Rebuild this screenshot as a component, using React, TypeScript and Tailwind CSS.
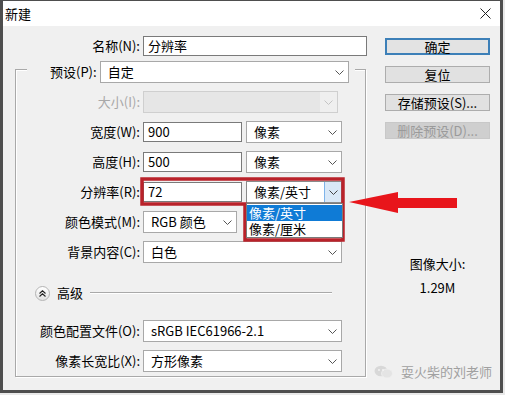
import React from "react";

function Chevron({ color = "#555" }: { color?: string }) {
  return (
    <svg width="9" height="5" viewBox="0 0 9 5">
      <polyline points="0.5,0.5 4.5,4.5 8.5,0.5" fill="none" stroke={color} strokeWidth="1" />
    </svg>
  );
}

function Select({ w, text, disabled }: { w: string; text?: string; disabled?: boolean }) {
  return (
    <div
      className={`flex items-center h-[22px] border ${
        disabled ? "border-[#cfcfcf] bg-[#e6e6e6]" : "border-[#a8a8a8] bg-white"
      } ${w}`}
    >
      <span className="flex-1 pl-[7px] text-[13px] leading-[20px] whitespace-nowrap">{text}</span>
      <span
        className={`w-[17px] h-full flex items-center justify-center ${disabled ? "bg-[#efefef]" : ""}`}
      >
        <Chevron color={disabled ? "#c4c4c4" : "#555"} />
      </span>
    </div>
  );
}

function Input({ w, value }: { w: string; value: string }) {
  return (
    <div className={`h-[20px] border border-[#7a7a7a] bg-white flex items-center pl-[4px] text-[13px] ${w}`}>
      {value}
    </div>
  );
}

function Row({
  label,
  disabled,
  children,
  className = "",
}: {
  label: string;
  disabled?: boolean;
  children: React.ReactNode;
  className?: string;
}) {
  return (
    <div className={`flex items-center h-[22px] ${className}`}>
      <div className={`w-[124px] text-right text-[13px] ${disabled ? "text-[#a8a8a8]" : "text-black"}`}>
        {label}
      </div>
      <div className="ml-[3px] flex items-center gap-[4px]">{children}</div>
    </div>
  );
}

function Button({ label, primary, disabled }: { label: string; primary?: boolean; disabled?: boolean }) {
  return (
    <div
      className={`w-[105px] h-[17px] flex items-center justify-center text-[13px] leading-none ${
        primary
          ? "border-2 border-[#3d80b8] bg-[#e3e3e3] text-black"
          : disabled
          ? "border border-[#c8c8c8] bg-[#cfcfcf] text-[#9a9a9a]"
          : "border border-[#adadad] bg-[#e1e1e1] text-black"
      }`}
    >
      {label}
    </div>
  );
}

export default function App() {
  return (
    <div className="relative w-[505px] h-[395px] bg-[#e9e9e9] font-['Noto_Sans_CJK_SC','Noto_Sans',sans-serif] text-black">
      <div className="w-[503px] h-[393px] border-[#4e4e4e] border-x-[3px] border-b-[3px] border-t flex flex-col">
        {/* title bar */}
        <div className="h-[25px] bg-white flex items-center justify-between pl-[2px] pr-[9px]">
          <span className="text-[13px]">新建</span>
          <svg width="11" height="11" viewBox="0 0 11 11">
            <path d="M0.5 0.5 L10.5 10.5 M10.5 0.5 L0.5 10.5" stroke="#222" strokeWidth="1" />
          </svg>
        </div>

        {/* body */}
        <div className="flex-1 bg-[#f0f0f0] relative flex">
          {/* left column */}
          <div className="w-[372px] flex flex-col">
            <div className="mt-[10px] flex items-center h-[20px]">
              <div className="w-[137px] text-right text-[13px]">名称(N):</div>
              <div className="ml-[3px]">
                <Input w="w-[224px]" value="分辨率" />
              </div>
            </div>

            <div className="ml-[12px] mt-[13px] w-[351px] border border-[#a9a9a9] shadow-[1px_1px_0_#ffffff,inset_1px_1px_0_#ffffff] flex flex-col pb-[4px]">
              {/* preset row over the top border */}
              <div className="-mt-[9px] flex">
                <div className="ml-[11px] bg-[#f0f0f0] pl-[23px] pr-[6px] flex items-center h-[22px]">
                  <span className="text-[13px]">预设(P):</span>
                  <div className="ml-[3px]">
                    <Select w="w-[249px]" text="自定" />
                  </div>
                </div>
              </div>

              <Row label="大小(I):" disabled className="mt-[8px]">
                <Select w="w-[195px]" disabled />
              </Row>
              <Row label="宽度(W):" className="mt-[8px]">
                <Input w="w-[99px]" value="900" />
                <Select w="w-[96px]" text="像素" />
              </Row>
              <Row label="高度(H):" className="mt-[8px]">
                <Input w="w-[99px]" value="500" />
                <Select w="w-[96px]" text="像素" />
              </Row>
              <Row label="分辨率(R):" className="mt-[8px]">
                <Input w="w-[99px]" value="72" />
                <div className="relative">
                  <div className="flex items-center h-[22px] w-[96px] border border-[#8a8a8a] bg-white">
                    <span className="flex-1 pl-[7px] text-[13px] leading-[20px]">像素/英寸</span>
                    <span className="w-[17px] h-full flex items-center justify-center bg-[#d9e8f7] border-l border-[#7eb4ea]">
                      <Chevron color="#444" />
                    </span>
                  </div>
                  <div className="absolute left-0 top-full w-[97px] border border-[#7a7a7a] bg-white flex flex-col pt-[1px] z-10">
                    <div className="h-[16px] bg-[#0f7bd6] text-white text-[13px] leading-[16px] pl-[2px]">像素/英寸</div>
                    <div className="h-[16px] text-[13px] leading-[16px] pl-[2px]">像素/厘米</div>
                  </div>
                </div>
              </Row>
              <Row label="颜色模式(M):" className="mt-[8px]">
                <Select w="w-[94px]" text="RGB 颜色" />
              </Row>
              <Row label="背景内容(C):" className="mt-[8px]">
                <Select w="w-[199px]" text="白色" />
              </Row>

              {/* advanced */}
              <div className="mt-[19px] h-[22px] flex items-center pl-[19px] pr-[33px]">
                <div className="w-[15px] h-[15px] rounded-full border border-[#b5b5b5] bg-gradient-to-b from-white to-[#e4e4e4] flex items-center justify-center">
                  <svg width="7" height="7" viewBox="0 0 7 7">
                    <polyline points="0.5,3.5 3.5,0.8 6.5,3.5" fill="none" stroke="#222" strokeWidth="1.1" />
                    <polyline points="0.5,6.5 3.5,3.8 6.5,6.5" fill="none" stroke="#222" strokeWidth="1.1" />
                  </svg>
                </div>
                <span className="ml-[7px] text-[13px]">高级</span>
                <div className="ml-[7px] flex-1 h-[2px] border-t border-[#a9a9a9] border-b border-b-white" />
              </div>

              <Row label="颜色配置文件(O):" className="mt-[16px]">
                <Select w="w-[199px]" text="sRGB IEC61966-2.1" />
              </Row>
              <Row label="像素长宽比(X):" className="mt-[8px]">
                <Select w="w-[199px]" text="方形像素" />
              </Row>
            </div>
          </div>

          {/* right column */}
          <div className="flex-1 flex flex-col pt-[12px]">
            <div className="ml-[10px] flex flex-col gap-[11px]">
              <Button label="确定" primary />
              <Button label="复位" />
              <Button label="存储预设(S)..." />
              <Button label="删除预设(D)..." disabled />
            </div>
            <div className="mt-[117px] text-center text-[13px] leading-[16px]">图像大小:</div>
            <div className="mt-[8px] text-center text-[13px] leading-[16px]">1.29M</div>
          </div>

          {/* watermark */}
          <div className="absolute right-[8px] bottom-[10px] flex items-center gap-[7px] text-[#a0a0a0] text-[13px] leading-[16px]">
            <svg width="20" height="14" viewBox="0 0 20 14">
              <ellipse cx="7" cy="6" rx="6.5" ry="5.2" fill="#d8d8d8" />
              <ellipse cx="13" cy="8.5" rx="5.5" ry="4.5" fill="#e4e4e4" stroke="#f0f0f0" strokeWidth="0.8" />
              <circle cx="5" cy="5" r="0.9" fill="#f5f5f5" />
              <circle cx="9" cy="5" r="0.9" fill="#f5f5f5" />
            </svg>
            <span>耍火柴的刘老师</span>
          </div>
        </div>
      </div>

      {/* annotation overlay */}
      <svg className="absolute inset-0 pointer-events-none" width="505" height="395" viewBox="0 0 505 395">
        <polygon
          points="142,179 343,179 343,240 245,240 245,204 142,204"
          fill="none"
          stroke="#b9222a"
          strokeWidth="3.5"
        />
        <polygon points="349,202 398,192 398,198 457,198 457,208 398,208 398,213" fill="#e8151b" />
      </svg>
    </div>
  );
}
